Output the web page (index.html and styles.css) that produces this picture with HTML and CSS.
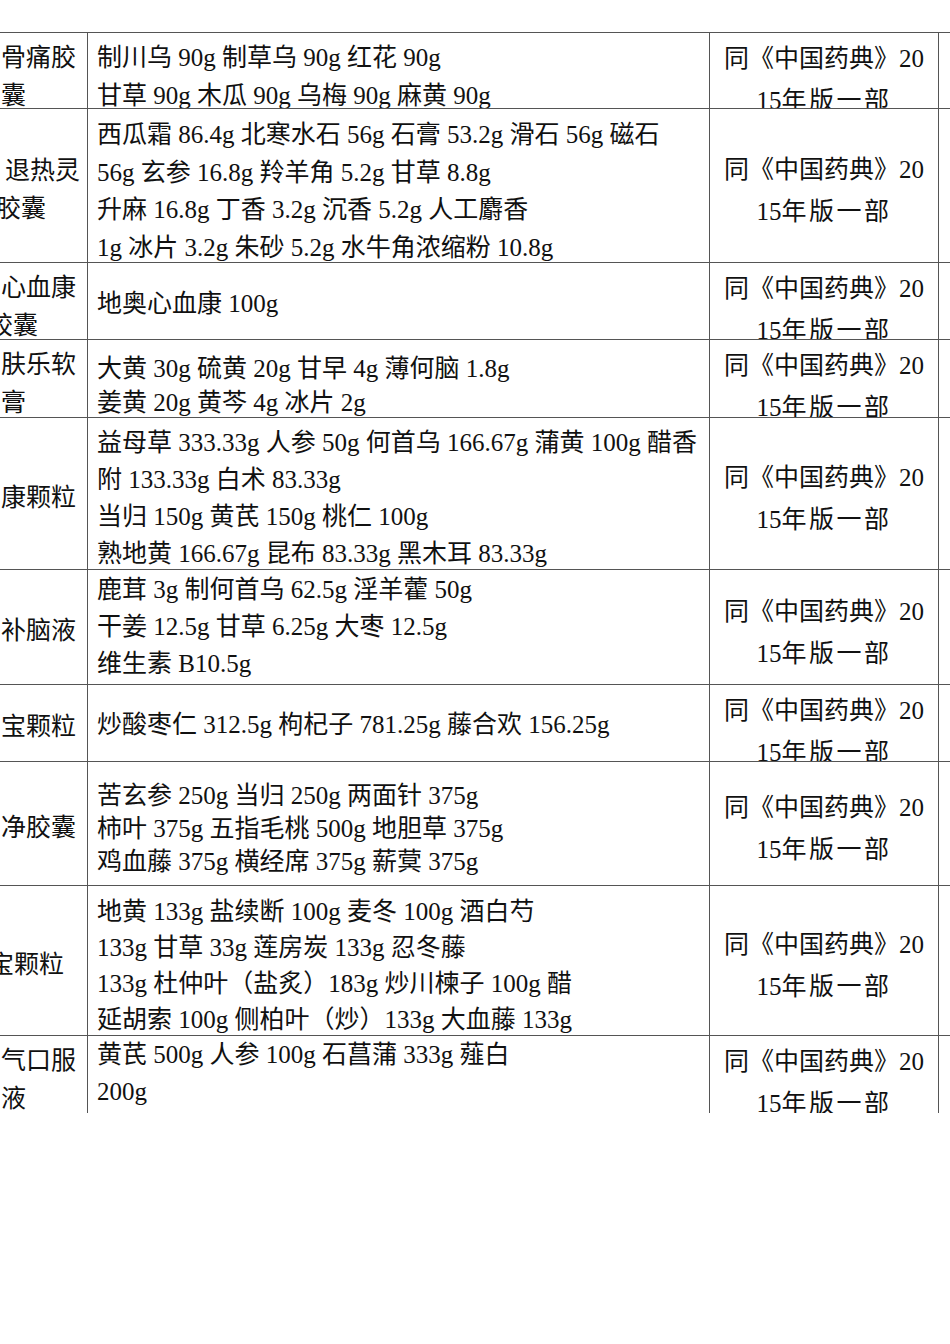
FILE: index.html
```html
<!DOCTYPE html>
<html lang="zh-CN">
<head>
<meta charset="utf-8">
<title>药品处方表</title>
<link rel="stylesheet" href="styles.css">
</head>
<body>
<div class="sheet">
  <div class="row r1">
    <div class="cell name"><div class="txt"><span class="ln">骨痛胶</span><span class="ln">囊</span></div></div>
    <div class="cell ing"><span class="ln">制川乌 90g 制草乌 90g 红花 90g</span><span class="ln">甘草 90g 木瓜 90g 乌梅 90g 麻黄 90g</span></div>
    <div class="cell ref"><div class="txt"><span class="ln">同《中国药典》20</span><span class="ln">15<span class="sp">年版一部</span></span></div></div>
    <div class="cell spare"></div>
  </div>
  <div class="row r2">
    <div class="cell name"><div class="txt"><span class="ln in5">退热灵</span><span class="ln out4">胶囊</span></div></div>
    <div class="cell ing"><span class="ln">西瓜霜 86.4g 北寒水石 56g 石膏 53.2g 滑石 56g 磁石</span><span class="ln">56g 玄参 16.8g 羚羊角 5.2g 甘草 8.8g</span><span class="ln">升麻 16.8g 丁香 3.2g 沉香 5.2g 人工麝香</span><span class="ln">1g 冰片 3.2g 朱砂 5.2g 水牛角浓缩粉 10.8g</span></div>
    <div class="cell ref"><div class="txt"><span class="ln">同《中国药典》20</span><span class="ln">15<span class="sp">年版一部</span></span></div></div>
    <div class="cell spare"></div>
  </div>
  <div class="row r3">
    <div class="cell name"><div class="txt"><span class="ln">心血康</span><span class="ln out12">胶囊</span></div></div>
    <div class="cell ing"><span class="ln">地奥心血康 100g</span></div>
    <div class="cell ref"><div class="txt"><span class="ln">同《中国药典》20</span><span class="ln">15<span class="sp">年版一部</span></span></div></div>
    <div class="cell spare"></div>
  </div>
  <div class="row r4">
    <div class="cell name"><div class="txt"><span class="ln">肤乐软</span><span class="ln">膏</span></div></div>
    <div class="cell ing"><span class="ln">大黄 30g 硫黄 20g 甘早 4g 薄何脑 1.8g</span><span class="ln">姜黄 20g 黄芩 4g 冰片 2g</span></div>
    <div class="cell ref"><div class="txt"><span class="ln">同《中国药典》20</span><span class="ln">15<span class="sp">年版一部</span></span></div></div>
    <div class="cell spare"></div>
  </div>
  <div class="row r5">
    <div class="cell name"><div class="txt"><span class="ln">康颗粒</span></div></div>
    <div class="cell ing"><span class="ln">益母草 333.33g 人参 50g 何首乌 166.67g 蒲黄 100g 醋香</span><span class="ln">附 133.33g 白术 83.33g</span><span class="ln">当归 150g 黄芪 150g 桃仁 100g</span><span class="ln">熟地黄 166.67g 昆布 83.33g 黑木耳 83.33g</span></div>
    <div class="cell ref"><div class="txt"><span class="ln">同《中国药典》20</span><span class="ln">15<span class="sp">年版一部</span></span></div></div>
    <div class="cell spare"></div>
  </div>
  <div class="row r6">
    <div class="cell name"><div class="txt"><span class="ln">补脑液</span></div></div>
    <div class="cell ing"><span class="ln">鹿茸 3g 制何首乌 62.5g 淫羊藿 50g</span><span class="ln">干姜 12.5g 甘草 6.25g 大枣 12.5g</span><span class="ln">维生素 B10.5g</span></div>
    <div class="cell ref"><div class="txt"><span class="ln">同《中国药典》20</span><span class="ln">15<span class="sp">年版一部</span></span></div></div>
    <div class="cell spare"></div>
  </div>
  <div class="row r7">
    <div class="cell name"><div class="txt"><span class="ln">宝颗粒</span></div></div>
    <div class="cell ing"><span class="ln">炒酸枣仁 312.5g 枸杞子 781.25g 藤合欢 156.25g</span></div>
    <div class="cell ref"><div class="txt"><span class="ln">同《中国药典》20</span><span class="ln">15<span class="sp">年版一部</span></span></div></div>
    <div class="cell spare"></div>
  </div>
  <div class="row r8">
    <div class="cell name"><div class="txt"><span class="ln">净胶囊</span></div></div>
    <div class="cell ing"><span class="ln">苦玄参 250g 当归 250g 两面针 375g</span><span class="ln">柿叶 375g 五指毛桃 500g 地胆草 375g</span><span class="ln">鸡血藤 375g 横经席 375g 薪蓂 375g</span></div>
    <div class="cell ref"><div class="txt"><span class="ln">同《中国药典》20</span><span class="ln">15<span class="sp">年版一部</span></span></div></div>
    <div class="cell spare"></div>
  </div>
  <div class="row r9">
    <div class="cell name"><div class="txt"><span class="ln out11">宝颗粒</span></div></div>
    <div class="cell ing"><span class="ln">地黄 133g 盐续断 100g 麦冬 100g 酒白芍</span><span class="ln">133g 甘草 33g 莲房炭 133g 忍冬藤</span><span class="ln">133g 杜仲叶（盐炙）183g 炒川楝子 100g 醋</span><span class="ln">延胡索 100g 侧柏叶（炒）133g 大血藤 133g</span></div>
    <div class="cell ref"><div class="txt"><span class="ln">同《中国药典》20</span><span class="ln">15<span class="sp">年版一部</span></span></div></div>
    <div class="cell spare"></div>
  </div>
  <div class="row r10">
    <div class="cell name"><div class="txt"><span class="ln">气口服</span><span class="ln">液</span></div></div>
    <div class="cell ing"><span class="ln">黄芪 500g 人参 100g 石菖蒲 333g 薤白</span><span class="ln">200g</span></div>
    <div class="cell ref"><div class="txt"><span class="ln">同《中国药典》20</span><span class="ln">15<span class="sp">年版一部</span></span></div></div>
    <div class="cell spare"></div>
  </div>
</div>
</body>
</html>
```

FILE: styles.css
```css
html, body {
  margin: 0;
  padding: 0;
  background: #ffffff;
}

.sheet {
  margin-top: 32px;
  height: 1081px;
  overflow: hidden;
  font-family: "Liberation Serif", "Noto Sans CJK SC", serif;
  font-size: 25px;
  color: #111111;
}

.row {
  display: grid;
  grid-template-columns: 87px 622px 229px 12px;
  height: var(--h);
}

.r1  { --h: 76px;  --lh: 38px;   --pt: 6px; }
.r2  { --h: 154px; --lh: 37.5px; --pt: 7px; }
.r3  { --h: 77px;  --lh: 37.5px; --pt: 22px; }
.r4  { --h: 78px;  --lh: 34px;   --pt: 12px; }
.r5  { --h: 152px; --lh: 37px;   --pt: 6px; }
.r6  { --h: 115px; --lh: 37px;   --pt: 1px; }
.r7  { --h: 77px;  --lh: 37.5px; --pt: 21px; }
.r8  { --h: 124px; --lh: 33px;   --pt: 17px; }
.r9  { --h: 150px; --lh: 36px;   --pt: 8px; }
.r10 { --h: 78px;  --lh: 37px;   --pt: 0px; }

.cell {
  border-top: 1px solid #555555;
  overflow: hidden;
  display: flex;
  flex-direction: column;
  white-space: nowrap;
}

.cell + .cell {
  border-left: 1px solid #555555;
}

.ln {
  display: block;
}

/* first column: product names, clipped at the page edge */
.name {
  padding-top: 6px;
  padding-left: 1px;
  line-height: 38px;
}

.name .txt {
  margin: auto 0;
}

.name .txt > .ln:last-child {
  margin-bottom: -2px;
}

.in5 { margin-left: 4px; }
.out4 { margin-left: -5px; }
.out11 { margin-left: -12px; }
.out12 { margin-left: -13px; }

/* second column: ingredients */
.ing {
  padding: var(--pt) 0 0 9px;
  line-height: var(--lh);
}

/* third column: standard reference */
.ref {
  padding-top: 5px;
  line-height: 42px;
  text-align: center;
}

.ref .txt {
  margin: auto 0;
}

.ref .txt > .ln:last-child {
  margin-bottom: -6px;
}

.sp {
  letter-spacing: 2.5px;
}
```
